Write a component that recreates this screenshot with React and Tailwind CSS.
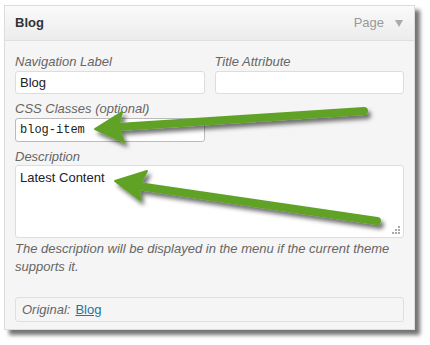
import React from "react";

function Arrows() {
  return (
    <svg className="absolute left-0 top-0" width="430" height="345" viewBox="0 0 430 345">
      <defs>
        <filter id="ds" x="-20%" y="-50%" width="140%" height="200%">
          <feDropShadow dx="3" dy="4" stdDeviation="2" floodColor="#000" floodOpacity="0.55" />
        </filter>
      </defs>
      <g filter="url(#ds)" fill="#5fa225" stroke="#5fa225">
        <line x1="118" y1="127" x2="364" y2="111" strokeWidth="8" strokeLinecap="round" />
        <polygon points="95,129 122,112 118,127 124,142" strokeWidth="2" strokeLinejoin="round" />
        <line x1="138" y1="186" x2="377" y2="221" strokeWidth="8" strokeLinecap="round" />
        <polygon points="115,181 147,171 139,186 140,200" strokeWidth="2" strokeLinejoin="round" />
      </g>
    </svg>
  );
}

export default function App() {
  return (
    <div className="relative w-[430px] h-[345px] bg-white overflow-hidden" style={{ fontFamily: '"Liberation Sans", Arial, sans-serif' }}>
      <div className="absolute left-[4px] top-[5px] w-[411px] h-[325px] border border-[#dcdcdc] bg-[#f5f5f5] shadow-[5px_5px_4px_rgba(0,0,0,0.55)]">
        <div className="h-[35px] flex items-center justify-between pl-[10px] pr-[11px] border-b border-[#dfdfdf] bg-gradient-to-b from-[#fafafa] to-[#ececec]">
          <span className="text-[13px] font-bold text-[#333]">Blog</span>
          <span className="flex items-center gap-[11px] text-[13px] text-[#999]">
            Page
            <svg width="8" height="7" viewBox="0 0 8 7"><polygon points="0,0 8,0 4,7" fill="#aaa" /></svg>
          </span>
        </div>
        <div className="px-[10px] pt-[13px]">
          <div className="flex gap-[10px]">
            <div className="w-[190px]">
              <div className="text-[13px] italic text-[#666] leading-[16px]">Navigation Label</div>
              <div className="mt-[1px] h-[23px] bg-white border border-[#ddd] rounded-[3px] flex items-center px-[4px] text-[13px] text-[#222]">Blog</div>
            </div>
            <div className="w-[190px]">
              <div className="text-[13px] italic text-[#666] leading-[16px]">Title Attribute</div>
              <div className="mt-[1px] h-[23px] bg-white border border-[#ddd] rounded-[3px]"></div>
            </div>
          </div>
          <div className="mt-[7px] text-[13px] italic text-[#666] leading-[16px]">CSS Classes (optional)</div>
          <div className="mt-[1px] w-[190px] h-[24px] bg-white border border-[#bbb] rounded-[3px] flex items-center px-[4px] text-[12px] text-[#222]" style={{ fontFamily: '"Liberation Mono", monospace' }}>blog-item</div>
          <div className="mt-[7px] text-[13px] italic text-[#666] leading-[16px]">Description</div>
          <div className="relative h-[73px] bg-white border border-[#ddd] rounded-[3px] px-[4px] pt-[4px] text-[13px] text-[#222] leading-[16px]">
            Latest Content
            <svg className="absolute right-[3px] bottom-[3px]" width="8" height="8" viewBox="0 0 8 8" fill="#aaa">
              <rect x="6" y="0" width="2" height="2" />
              <rect x="3" y="3" width="2" height="2" />
              <rect x="6" y="3" width="2" height="2" />
              <rect x="0" y="6" width="2" height="2" />
              <rect x="3" y="6" width="2" height="2" />
              <rect x="6" y="6" width="2" height="2" />
            </svg>
          </div>
          <div className="mt-[2px] text-[13px] italic text-[#666] leading-[18px]">
            The description will be displayed in the menu if the current theme supports it.
          </div>
          <div className="mt-[21px] h-[25px] border border-[#dfdfdf] rounded-[3px] flex items-center px-[6px] text-[13px]">
            <span className="italic text-[#666]">Original:</span>
            <a className="ml-[5px] text-[#21759b] underline">Blog</a>
          </div>
        </div>
      </div>
      <Arrows />
    </div>
  );
}
